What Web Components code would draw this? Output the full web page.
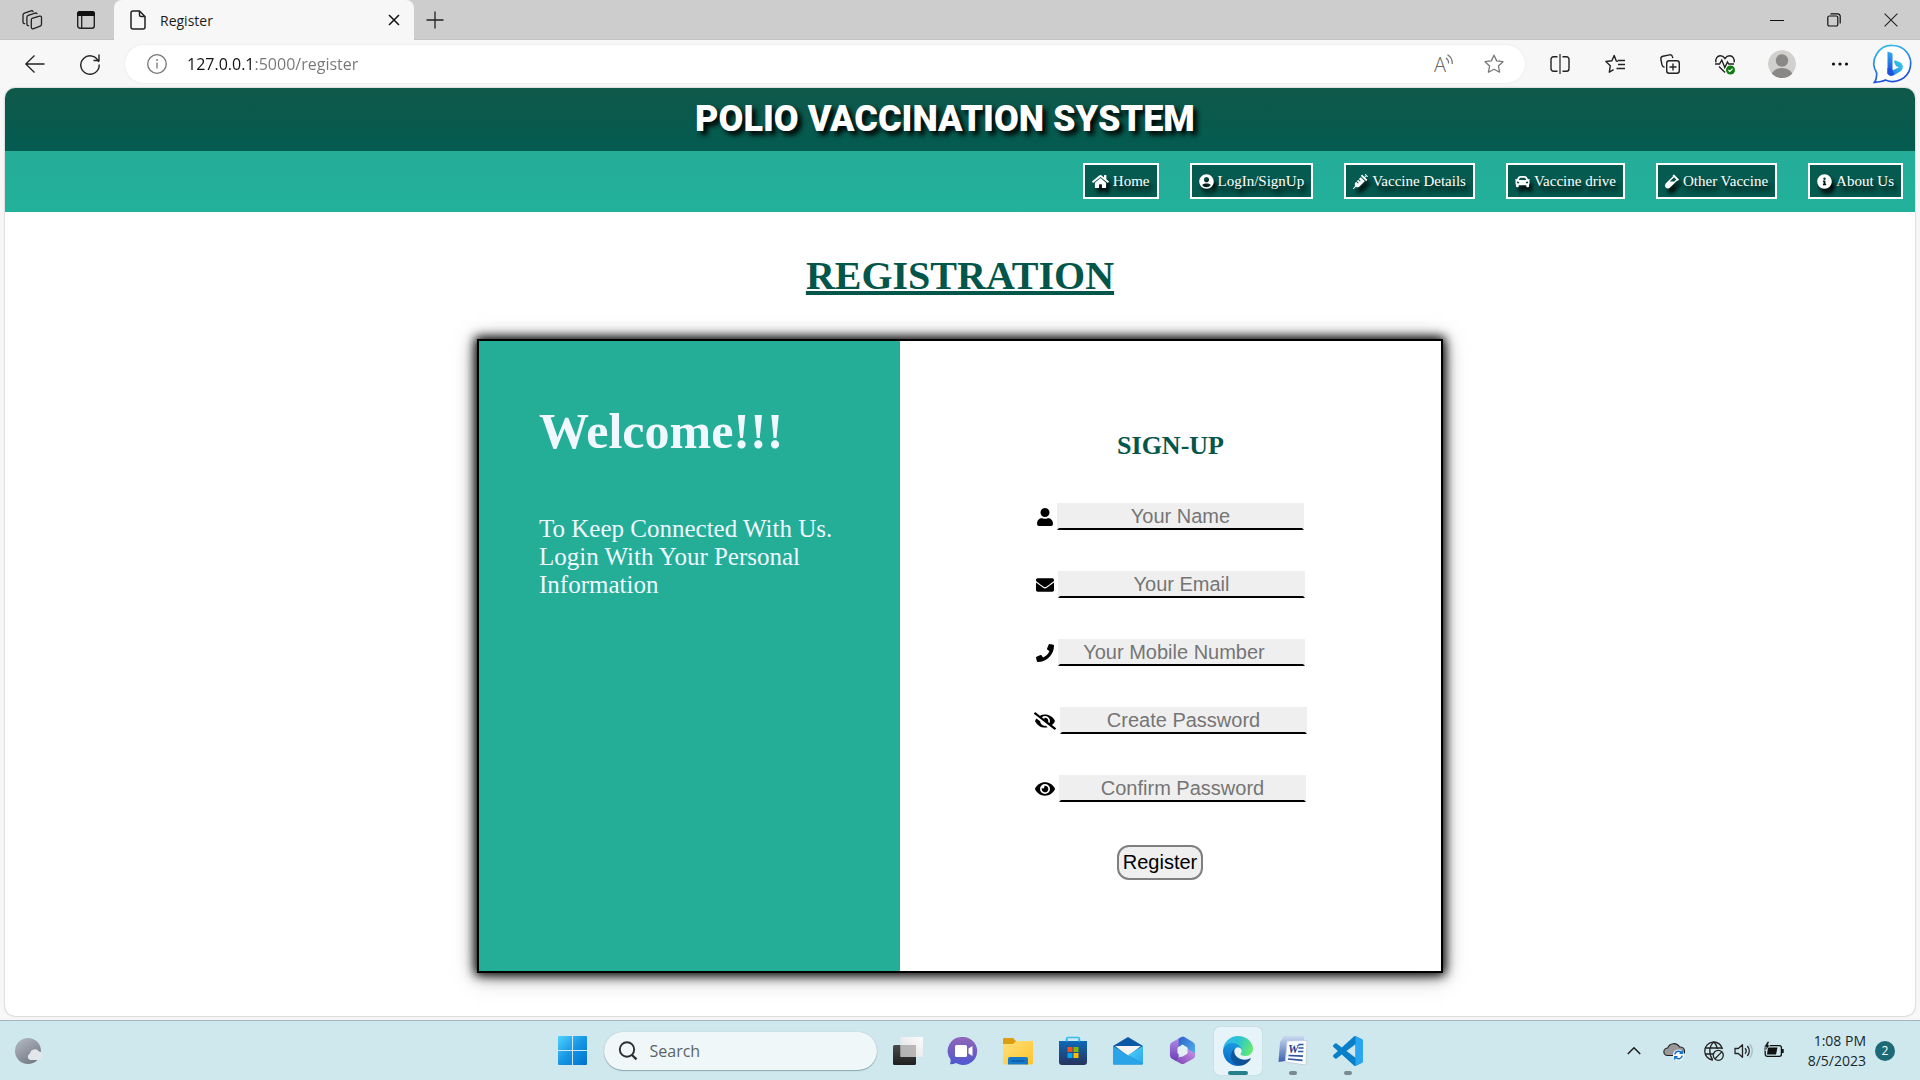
<!DOCTYPE html>
<html lang="en">
<head>
<meta charset="utf-8">
<title>Register</title>
<style>
  html, body { margin: 0; }
  body { font-family: "Open Sans", "Noto Sans", sans-serif; background: #f7f7f7; color: #1b1b1b; }
</style>
</head>
<body>
<desktop-screen>
  <edge-tabs slot="tabs"></edge-tabs>
  <edge-toolbar slot="toolbar"></edge-toolbar>
  <polio-page slot="page"></polio-page>
  <win-taskbar slot="taskbar"></win-taskbar>
</desktop-screen>

<script>
const ICONS = {
  workspaces: ['0 0 22 22', '<g fill="none" stroke="#222" stroke-width="1.3" stroke-linejoin="round" stroke-linecap="round"><path d="M11 9.3l7.5-2.2c1.2-.3 2 .4 2 1.5v6.700c0 .8-.5 1.500-1.300 1.800l-6.600 2.600c-1.200.5-2.300-.2-2.300-1.400v-7.200c0-.9.2-1.500.7-1.800z"/><path d="M7.600 16.700c-1 .1-1.700-.6-1.700-1.600V8.200c0-.9.5-1.600 1.400-1.900l6.700-2.200c.9-.3 1.600 0 2 .7"/><path d="M3.700 14.600c-1 0-1.700-.6-1.700-1.600V6c0-.9.5-1.600 1.400-1.900l6.700-2.200c.9-.3 1.600 0 2 .6"/></g>'],
  tabActions: ['0 0 18 18', '<rect x=".7" y=".7" width="16.600" height="16.600" rx="2.500" fill="none" stroke="#222" stroke-width="1.400"/><path d="M0 5V2.500A2.500 2.500 0 0 1 2.500 0h13A2.500 2.500 0 0 1 18 2.500V5z"/><path d="M4.700 5v12" stroke="#222" stroke-width="1.300"/>'],
  doc: ['0 0 16 20', '<path d="M1 3a2 2 0 0 1 2-2h6.500L15 6.500V17a2 2 0 0 1-2 2H3a2 2 0 0 1-2-2zM9.500 1v4a1.500 1.500 0 0 0 1.500 1.500h4" fill="none" stroke="#222" stroke-width="1.500"/>'],
  close: ['0 0 12 12', '<path d="M1 1l10 10M11 1L1 11" stroke="#111" stroke-width="1.500" fill="none"/>'],
  winClose: ['0 0 14 14', '<path d="M.6.6l12.800 12.800M13.400.6L.6 13.400" stroke="#222" stroke-width="1.100" fill="none"/>'],
  plus: ['0 0 18 18', '<path d="M9 .5v17M.5 9h17" stroke="#222" stroke-width="1.300"/>'],
  min: ['0 0 14 14', '<path d="M0 7.500h14" stroke="#111"/>'],
  max: ['0 0 14 14', '<g fill="none" stroke="#111" stroke-width="1.200"><rect x=".8" y="3" width="10" height="10" rx="1.600"/><path d="M3.500.8h7a2.600 2.600 0 0 1 2.700 2.600v7"/></g>'],
  back: ['0 0 20 20', '<path d="M19.500 10H.8M9.500 1.500L.8 10l8.700 8.500" fill="none" stroke="#222" stroke-width="1.300"/>'],
  reload: ['0 0 20 20', '<path d="M18.700 8A9.200 9.200 0 1 0 19.200 10.500M19 .5v6h-5.500" fill="none" stroke="#222" stroke-width="1.400"/>'],
  info: ['0 0 20 20', '<circle cx="10" cy="10" r="9.300" fill="none" stroke="#777" stroke-width="1.300"/><path d="M10 8.500v6" stroke="#777" stroke-width="1.300"/><circle cx="10" cy="6" r=".9" fill="#777"/>'],
  aloud: ['0 0 20 20', '<text x="0" y="18" font-family="Open Sans, sans-serif" font-weight="300" font-size="20" fill="#666">A</text><path d="M12 4a6 6 0 0 1 2.500 5.500M13.500.8a10 10 0 0 1 4.800 9.200" fill="none" stroke="#777" stroke-width="1.300"/>'],
  star: ['0 0 20 20', '<path d="M10 1.200l2.700 5.700 6.300.8-4.600 4.300 1.200 6.200L10 15.200l-5.600 3 1.200-6.200L1 7.700l6.300-.8z" fill="none" stroke="#777" stroke-width="1.300" stroke-linejoin="round"/>'],
  split: ['0 0 20 20', '<g fill="none" stroke="#222" stroke-width="1.400"><path d="M7.500 2.700h-4A2.500 2.500 0 0 0 1 5.200v9.600a2.500 2.500 0 0 0 2.500 2.500h4M12.500 2.700h4A2.500 2.500 0 0 1 19 5.200v9.600a2.500 2.500 0 0 1-2.500 2.500h-4"/><path d="M10 0v20" stroke-width="1.200"/></g>'],
  favs: ['0 0 20 20', '<path d="M13 7.300L11.300 7 9.200 1.500 6.900 6.800.9 7.500l4.400 4.300-1 6.400 4.300-2.600M13 6.500h7M13 10.500h7M11.500 14.500h8.500" fill="none" stroke="#222" stroke-width="1.400" stroke-linejoin="round"/>'],
  collections: ['0 0 20 20', '<g fill="none" stroke="#222" stroke-width="1.400"><rect x="6.700" y="6.700" width="12.600" height="12.600" rx="2.500"/><path d="M13 9.500v7M9.500 13h7M4.500 13.200C3 13 2.300 12 2 10.800L.9 5.500C.6 4 1.400 2.700 2.900 2.300L9.500.9c1.500-.3 2.700.5 3 2l.3 1.300"/></g>'],
  heart: ['0 0 20 20', '<g fill="none" stroke="#222" stroke-width="1.400"><path d="M.9 8.300C.2 4.500 2.400 1.800 5.300 1.800c2 0 3.500 1 4.700 2.700 1.200-1.700 2.700-2.700 4.700-2.700 2.900 0 5.100 2.700 4.400 6.500M4 12.500l6 6"/><path d="M0 10h4.500l2.300-4 3 7.500L12.500 8l1.200 2h5.300"/></g><circle cx="15.500" cy="16" r="4.500" fill="#107c10"/><path d="M13.400 16l1.500 1.500 2.700-2.800" fill="none" stroke="#fff" stroke-width="1.100"/>'],
  avatar: ['0 0 28 28', '<clipPath id="a"><circle cx="14" cy="14" r="14"/></clipPath><g clip-path="url(#a)"><circle cx="14" cy="14" r="14" fill="#d2d0ce"/><circle cx="14" cy="10.500" r="6.200" fill="#8a8886"/><ellipse cx="14" cy="25.500" rx="10.500" ry="7.500" fill="#8a8886"/></g>'],
  dots: ['0 0 18 18', '<circle cx="2.500" cy="9" r="1.600"/><circle cx="9" cy="9" r="1.600"/><circle cx="15.500" cy="9" r="1.600"/>'],
  bing: ['0 0 40 40', '<defs><linearGradient id="a" x1="0" y1="0" x2=".3" y2="1"><stop stop-color="#35c5f0"/><stop offset="1" stop-color="#1b4ed8"/></linearGradient><linearGradient id="b" x1="0" y1="0" x2="0" y2="1"><stop stop-color="#2fa8f5"/><stop offset="1" stop-color="#1b48d8"/></linearGradient><linearGradient id="c" x1="1" y1="0" x2="0" y2="1"><stop stop-color="#38d5e8"/><stop offset="1" stop-color="#2170e8"/></linearGradient></defs><path d="M20.500 1.500A18 18 0 1 1 13 36c-2.500 1.200-6 2-11 2.300C3.800 36 4.200 33.500 4.200 29A18 18 0 0 1 20.500 1.500z" transform="translate(-.5 0)" fill="#fff" stroke="url(#a)" stroke-width="1.700"/><path d="M14.500 7.500l3.500 1.300c1 .4 1.500 1 1.500 2v14.700l-5 5z" fill="url(#b)"/><path d="M14.500 27.500c0 4 3 5.500 6.500 3.700l6.500-4c4-2.500 2.500-8-1-9.200l-4-1.400c-1.200-.4-1.800.6-1.300 1.600l1.700 3.700 3 1.300-9 4.500z" fill="url(#c)"/><path d="M14.500 24v4c0 3.500 3.500 4.500 6.500 2.800l-1.500-5.300z" fill="#1c52dc"/>'],

  home: ['0 0 576 512', '<path d="M280.370 148.260L96 300.110V464a16 16 0 0 0 16 16l112.060-.29a16 16 0 0 0 15.920-16V368a16 16 0 0 1 16-16h64a16 16 0 0 1 16 16v95.640a16 16 0 0 0 16 16.050L464 480a16 16 0 0 0 16-16V300L295.670 148.260a12.190 12.190 0 0 0-15.300 0zM571.600 251.470L488 182.560V44.050a12 12 0 0 0-12-12h-56a12 12 0 0 0-12 12v72.610L318.470 43a48 48 0 0 0-61 0L4.340 251.470a12 12 0 0 0-1.600 16.900l25.500 31A12 12 0 0 0 45.150 301l235.220-193.740a12.190 12.190 0 0 1 15.300 0L530.900 301a12 12 0 0 0 16.900-1.600l25.500-31a12 12 0 0 0-1.700-16.930z"/>'],
  account: ['0 0 496 512', '<path d="M248 8C111 8 0 119 0 256s111 248 248 248 248-111 248-248S385 8 248 8zm0 96c48.600 0 88 39.400 88 88s-39.400 88-88 88-88-39.400-88-88 39.400-88 88-88zm0 344c-58.700 0-111.300-26.600-146.500-68.200 18.800-35.400 55.600-59.800 98.500-59.800 2.400 0 4.800.4 7.100 1.100 13 4.200 26.600 6.900 40.900 6.900 14.300 0 28-2.700 40.900-6.900 2.300-.7 4.700-1.100 7.100-1.100 42.900 0 79.700 24.400 98.500 59.800C359.300 421.400 306.700 448 248 448z"/>'],
  syringe: ['0 0 512 512', '<path d="M201.500 174.800l55.700 55.800c3.100 3.100 3.100 8.200 0 11.300l-11.300 11.300c-3.100 3.100-8.200 3.100-11.300 0l-55.700-55.800-45.300 45.300 55.800 55.800c3.100 3.100 3.100 8.200 0 11.300l-11.300 11.300c-3.100 3.100-8.200 3.100-11.300 0L111 265.200l-26.400 26.400c-17.300 17.300-25.600 41.100-23 65.400l7.100 63.600L2.300 487c-3.100 3.100-3.100 8.200 0 11.300l11.300 11.300c3.100 3.100 8.200 3.100 11.300 0l66.300-66.300 63.600 7.100c23.900 2.600 47.900-5.400 65.400-23l181.900-181.900-135.700-135.700-64.900 65zm308.200-93.300L430.500 2.300c-3.100-3.100-8.200-3.100-11.300 0l-11.300 11.300c-3.100 3.100-3.100 8.200 0 11.300l28.300 28.300-45.300 45.300-56.600-56.600-17-17c-3.100-3.100-8.200-3.100-11.300 0l-33.900 33.900c-3.100 3.100-3.100 8.200 0 11.300l17 17L424.800 223l17 17c3.100 3.100 8.200 3.100 11.300 0l33.900-34c3.100-3.100 3.100-8.200 0-11.300l-73.500-73.500 45.300-45.300 28.300 28.300c3.100 3.100 8.200 3.100 11.300 0l11.300-11.300c3.100-3.200 3.100-8.200 0-11.400z"/>'],
  car: ['0 0 512 512', '<path d="M499.990 176h-59.870l-16.640-41.600C406.380 91.630 365.570 64 319.500 64h-127c-46.060 0-86.880 27.630-103.990 70.400L71.870 176H12.010C4.200 176-1.530 183.340.37 190.910l6 24C7.700 220.250 12.500 224 18.010 224h20.070C24.650 235.730 16 252.780 16 272v48c0 16.120 6.160 30.670 16 41.930V416c0 17.670 14.330 32 32 32h32c17.670 0 32-14.330 32-32v-32h256v32c0 17.670 14.330 32 32 32h32c17.670 0 32-14.330 32-32v-54.070c9.840-11.250 16-25.800 16-41.930v-48c0-19.220-8.650-36.270-22.070-48H494c5.510 0 10.310-3.750 11.640-9.090l6-24c1.890-7.570-3.840-14.910-11.650-14.910zm-352.060-17.830c7.290-18.220 24.940-30.170 44.570-30.170h127c19.630 0 37.280 11.950 44.570 30.170L384 208H128l19.930-49.830zM96 319.800c-19.200 0-32-12.760-32-31.900S76.800 256 96 256s48 28.710 48 47.850-28.800 15.950-48 15.950zm320 0c-19.200 0-48 3.190-48-15.950S396.800 256 416 256s32 12.760 32 31.900-12.800 31.900-32 31.900z"/>'],
  vial: ['0 0 480 512', '<path d="M477.700 186.100L309.500 18.300c-3.100-3.100-8.200-3.100-11.300 0l-34 33.900c-3.100 3.100-3.100 8.200 0 11.300l11.200 11.100L33 316.500c-38.800 38.700-45.100 102-9.400 143.500 20.600 24 49.500 36 78.400 35.900 26.400 0 52.800-10 72.900-30.100l246.300-245.700 11.200 11.100c3.100 3.100 8.200 3.100 11.300 0l34-33.900c3.100-3 3.100-8.100 0-11.200zM318 256H161l148-147.700 78.500 78.300L318 256z"/>'],
  infoFill: ['0 0 512 512', '<path d="M256 8C119.043 8 8 119.083 8 256c0 136.997 111.043 248 248 248s248-111.003 248-248C504 119.083 392.957 8 256 8zm0 110c23.196 0 42 18.804 42 42s-18.804 42-42 42-42-18.804-42-42 18.804-42 42-42zm56 254c0 6.627-5.373 12-12 12h-88c-6.627 0-12-5.373-12-12v-24c0-6.627 5.373-12 12-12h12v-64h-12c-6.627 0-12-5.373-12-12v-24c0-6.627 5.373-12 12-12h64c6.627 0 12 5.373 12 12v100h12c6.627 0 12 5.373 12 12v24z"/>'],
  user: ['0 0 448 512', '<path d="M224 256c70.700 0 128-57.300 128-128S294.700 0 224 0 96 57.300 96 128s57.300 128 128 128zm89.600 32h-16.700c-22.200 10.200-46.900 16-72.900 16s-50.600-5.800-72.900-16h-16.700C60.200 288 0 348.200 0 422.400V464c0 26.500 21.500 48 48 48h352c26.500 0 48-21.500 48-48v-41.600c0-74.200-60.200-134.400-134.400-134.400z"/>'],
  envelope: ['0 0 512 512', '<path d="M502.300 190.800c3.900-3.100 9.700-.2 9.700 4.700V400c0 26.500-21.500 48-48 48H48c-26.500 0-48-21.500-48-48V195.600c0-5 5.700-7.800 9.700-4.700 22.400 17.400 52.100 39.500 154.100 113.600 21.100 15.400 56.700 47.800 92.200 47.600 35.700.3 72-32.800 92.300-47.600 102-74.100 131.600-96.300 154-113.700zM256 320c23.200.4 56.600-29.200 73.400-41.400 132.700-96.300 142.800-104.700 173.400-128.700 5.800-4.500 9.200-11.500 9.200-18.900v-19c0-26.500-21.500-48-48-48H48c-26.500 0-48 21.500-48 48v19c0 7.400 3.400 14.300 9.200 18.900 30.600 23.900 40.700 32.400 173.400 128.700 16.800 12.200 50.200 41.800 73.400 41.400z"/>'],
  phone: ['0 0 512 512', '<path d="M493.400 24.600l-104-24c-11.300-2.600-22.900 3.300-27.500 13.900l-48 112c-4.200 9.800-1.400 21.300 6.900 28l60.600 49.600c-36 76.700-98.900 140.500-177.200 177.200l-49.600-60.600c-6.800-8.300-18.200-11.100-28-6.900l-112 48C3.900 366.500-2 378.100.6 389.400l24 104C27.100 504.200 36.700 512 48 512c256.100 0 464-207.500 464-464 0-11.200-7.700-20.900-18.600-23.400z"/>'],
  eyeSlash: ['0 0 640 512', '<path d="M320 400c-75.850 0-137.250-58.710-142.900-133.110L72.200 185.820c-13.790 17.300-26.480 35.590-36.720 55.590a32.350 32.350 0 0 0 0 29.190C89.710 376.410 197.070 448 320 448c26.910 0 52.870-4 77.890-10.460L346 397.390a144.130 144.130 0 0 1-26 2.610zm313.820 58.100l-110.550-85.440a331.250 331.250 0 0 0 81.250-102.070 32.350 32.350 0 0 0 0-29.190C550.290 135.590 442.930 64 320 64a308.150 308.150 0 0 0-147.320 37.700L45.460 3.370A16 16 0 0 0 23 6.180L3.370 31.450A16 16 0 0 0 6.180 53.900l588.360 454.730a16 16 0 0 0 22.460-2.810l19.640-25.270a16 16 0 0 0-2.820-22.450zm-183.720-142l-39.300-30.380A94.750 94.750 0 0 0 416 256a94.760 94.760 0 0 0-121.310-92.210A47.650 47.650 0 0 1 304 192a46.640 46.640 0 0 1-1.540 10l-73.610-56.890A142.310 142.310 0 0 1 320 112a143.920 143.920 0 0 1 144 144c0 21.630-5.290 41.790-13.900 60.110z"/>'],
  eye: ['0 0 576 512', '<path d="M572.520 241.400C518.290 135.590 410.930 64 288 64S57.680 135.640 3.480 241.410a32.350 32.350 0 0 0 0 29.190C57.710 376.410 165.070 448 288 448s230.320-71.640 284.520-177.410a32.350 32.350 0 0 0 0-29.190zM288 400a144 144 0 1 1 144-144 143.930 143.930 0 0 1-144 144zm0-240a95.310 95.310 0 0 0-25.310 3.790 47.850 47.850 0 0 1-66.900 66.900A95.780 95.780 0 1 0 288 160z"/>'],

  windows: ['0 0 29 29', '<defs><linearGradient id="a" gradientUnits="userSpaceOnUse" x1="0" y1="0" x2="29" y2="29"><stop stop-color="#4fd3ff"/><stop offset=".5" stop-color="#1795e4"/><stop offset="1" stop-color="#0070d0"/></linearGradient></defs><path d="M1 0h13v14H0V1a1 1 0 0 1 1-1zM15 0h13a1 1 0 0 1 1 1v13H15zM0 15h14v14H1a1 1 0 0 1-1-1zM15 15h14v13a1 1 0 0 1-1 1H15z" fill="url(#a)"/>'],
  search: ['0 0 20 20', '<circle cx="9" cy="8.500" r="7.200" fill="none" stroke="#2a2f31" stroke-width="1.900"/><path d="M13.500 13.500l5 4.800" stroke="#2a2f31" stroke-width="2.300"/>'],
  taskView: ['0 0 30 30', '<defs><linearGradient id="a" x1="0" y1="0" x2="0" y2="1"><stop stop-color="#4b4b4b"/><stop offset="1" stop-color="#1f1f1f"/></linearGradient><linearGradient id="b" x1="1" y1="0" x2="0" y2="1"><stop stop-color="#fff"/><stop offset="1" stop-color="#ddd"/></linearGradient></defs><rect x="0" y="9" width="23" height="20" rx="1.500" fill="url(#a)"/><rect x="7.500" y="1" width="22.500" height="20" rx="1" fill="url(#b)" opacity=".92"/><path d="M7.500 9H23v12H7.500z" fill="#aaa" opacity=".75"/>'],
  chat: ['0 0 30 30', '<defs><linearGradient id="a" x1="0" y1="0" x2="0" y2="1"><stop stop-color="#9266b8"/><stop offset="1" stop-color="#4f57cf"/></linearGradient></defs><path d="M15 1a14 14 0 1 1-7 26c-2 1-4 1.500-6 1.300.6-1.600.8-3.300.5-5A14 14 0 0 1 15 1z" fill="url(#a)"/><rect x="7" y="9" width="12" height="12" rx="1.500" fill="#fff"/><path d="M20.500 12.500l4-2.500v10l-4-2.500z" fill="#fff"/>'],
  explorer: ['0 0 30 30', '<defs><linearGradient id="a" x1="0" y1="0" x2="1" y2="1"><stop stop-color="#ffe07a"/><stop offset="1" stop-color="#ffc42d"/></linearGradient></defs><path d="M1 2h9l3 3h16a1 1 0 0 1 1 1v6H0V3a1 1 0 0 1 1-1z" fill="#dd9d10"/><path d="M0 8h10l3-3h17v22a1.500 1.500 0 0 1-1.500 1.500h-27A1.500 1.500 0 0 1 0 27z" fill="url(#a)"/><path d="M5 28.500V23a2 2 0 0 1 2-2h16a2 2 0 0 1 2 2v5.500z" fill="#1579ca"/><path d="M8.500 25h13" stroke="#064f91"/>'],
  store: ['0 0 30 30', '<defs><linearGradient id="a" x1="0" y1="0" x2="0" y2="1"><stop stop-color="#0d69b8"/><stop offset="1" stop-color="#26335c"/></linearGradient></defs><path d="M8.500 8V3a1.500 1.500 0 0 1 1.500-1.500h10A1.500 1.500 0 0 1 21.500 3v5" fill="none" stroke="#35bdf0" stroke-width="1.600"/><path d="M1 5h28v21a3 3 0 0 1-3 3H4a3 3 0 0 1-3-3z" fill="url(#a)"/><path d="M9 5.500V3M21 5.500V3" stroke="#35bdf0" stroke-width="1.600"/><path d="M9.500 11h5v5h-5z" fill="#f25022"/><path d="M15.500 11h5v5h-5z" fill="#7fba00"/><path d="M9.500 17h5v5h-5z" fill="#00a4ef"/><path d="M15.500 17h5v5h-5z" fill="#ffb900"/>'],
  mail: ['0 0 30 30', '<defs><linearGradient id="a" x1="0" y1="0" x2="1" y2="1"><stop stop-color="#1a8bd8"/><stop offset="1" stop-color="#1684dc"/></linearGradient><linearGradient id="b" x1="0" y1="0" x2="1" y2="1"><stop stop-color="#52d3f7"/><stop offset="1" stop-color="#2aa6ea"/></linearGradient></defs><path d="M0 10l15-9 15 9v8H0z" fill="#0a58a6"/><path d="M2 10h26L15 20z" fill="#f4f4f4"/><path d="M0 10v17.500a1 1 0 0 0 1 1h28a1 1 0 0 0 1-1V10L15 20z" fill="url(#a)"/><path d="M30 10v18L15 19z" fill="url(#b)"/><path d="M0 10l30 18.500H0z" fill="#2ba3e8"/>'],
  m365: ['0 0 30 30', '<defs><linearGradient id="a" x1="0" y1="0" x2="0" y2="1"><stop stop-color="#b590ea"/><stop offset="1" stop-color="#6d3fb5"/></linearGradient><linearGradient id="b" x1="0" y1="0" x2="1" y2="1"><stop stop-color="#2c62c9"/><stop offset="1" stop-color="#55b9f0"/></linearGradient><linearGradient id="c" x1="0" y1="1" x2="1" y2="0"><stop stop-color="#7840b4"/><stop offset="1" stop-color="#cf9ae8"/></linearGradient></defs><path d="M14 1L4 6.500a4 4 0 0 0-2 3.500v10a4 4 0 0 0 2 3.500l4 2.200a3 3 0 0 0 3-2.700V12z" fill="url(#a)"/><path d="M11 2.500l3-1.500a3 3 0 0 1 3 0l9 5.500a4 4 0 0 1 2 3.500v10c0 1-.4 2-1 2.700L20 17V12l-5-3-4 3z" fill="url(#b)"/><path d="M28 18v2a4 4 0 0 1-2 3.500L17 28.500a4 4 0 0 1-4 0l-7-4c3 1 5 0 5-2.500l4-.8 5-3V13z" fill="url(#c)"/><path d="M15 9.500l4.700 2.700v5.600L15 20.500l-4.700-2.700v-5.600z" fill="#e3f0f5" stroke="#e3f0f5" stroke-linejoin="round"/>'],
  edge: ['4.600 4.900 256 256', '<defs><linearGradient id="a" x1="0" y1="0" x2="1" y2="0"><stop stop-color="#0c59a4"/><stop offset="1" stop-color="#114a8b"/></linearGradient><linearGradient id="b" x1=".6" y1="0" x2=".4" y2="1"><stop stop-color="#1b9de2"/><stop offset="1" stop-color="#0667c8"/></linearGradient><linearGradient id="c" x1="0" y1=".3" x2="1" y2=".6"><stop stop-color="#35b8ee"/><stop offset=".45" stop-color="#2bc3d2"/><stop offset="1" stop-color="#66eb6e"/></linearGradient></defs><path d="M235.680 195.460a93.730 93.730 0 0 1-10.540 4.710 101.870 101.870 0 0 1-35.900 6.460c-47.320 0-88.540-32.550-88.540-74.320A31.480 31.480 0 0 1 117.130 105c-42.800 1.800-53.800 46.400-53.800 72.530 0 73.880 68.090 81.370 82.760 81.370 7.910 0 19.840-2.300 27-4.560l1.310-.44a128.340 128.340 0 0 0 66.600-52.800 4 4 0 0 0-5.320-5.640z" fill="url(#a)"/><path d="M110.340 246.340A79.200 79.200 0 0 1 87.600 225a80.720 80.720 0 0 1 29.530-120c3.120-1.470 8.450-4.130 15.540-4a32.350 32.350 0 0 1 25.690 13 31.880 31.880 0 0 1 6.360 18.660c0-.21 24.460-79.600-80-79.600-43.900 0-80 41.660-80 78.210a130.150 130.150 0 0 0 12.110 56 128 128 0 0 0 156.380 67.110 75.550 75.550 0 0 1-62.780-8z" fill="url(#b)"/><path d="M156.940 153.780c-.81 1.050-3.300 2.500-3.300 5.660 0 2.610 1.700 5.120 4.720 7.230 14.380 10 41.490 8.680 41.560 8.680a59.560 59.560 0 0 0 30.270-8.350 61.380 61.380 0 0 0 30.430-52.880c.26-22.410-8-37.310-11.340-43.910-21.190-41.450-66.930-65.290-116.670-65.290a128 128 0 0 0-128 126.200c.48-36.540 36.800-66.050 80-66.050 3.500 0 23.460.34 42 10.070 16.340 8.580 24.900 18.940 30.850 29.210 6.180 10.670 7.280 24.150 7.280 29.520s-2.740 13.330-7.800 19.910z" fill="url(#c)"/>'],
  word: ['0 0 30 30', '<defs><linearGradient id="a" x1="0" y1="0" x2="0" y2="1"><stop stop-color="#c9d9f0"/><stop offset="1" stop-color="#3a62ae"/></linearGradient></defs><path d="M6 0h20v4L9 6l-2 19-6.500 1L2 6z" fill="url(#a)"/><path d="M9 5l20-.5L28 29 7.500 26z" fill="#fafcff" stroke="#b9c4d6" stroke-width=".7"/><text x="10" y="17" font-family="Liberation Serif, serif" font-weight="bold" font-style="italic" font-size="12" fill="#1d3f8c">W</text><path d="M20.500 8.500h5M20.500 12h5M20 15.500h5.300M10.500 19.500l14.500.7M10 23l14.500 1.300" stroke="#2d53a3" stroke-width="1.700"/>'],
  code: ['0 0 24 24', '<path d="M23.150 2.587L18.210.21a1.494 1.494 0 0 0-1.705.29l-9.460 8.630-4.120-3.128a.999.999 0 0 0-1.276.057L.327 7.261A1 1 0 0 0 .326 8.740L3.899 12 .326 15.260a1 1 0 0 0 .001 1.479L1.650 17.940a.999.999 0 0 0 1.276.057l4.120-3.128 9.460 8.630a1.492 1.492 0 0 0 1.704.29l4.942-2.377A1.500 1.500 0 0 0 24 20.060V3.939a1.500 1.500 0 0 0-.85-1.352zm-5.146 14.861L10.826 12l7.178-5.448v10.896z" fill="#0a7fc9"/><path d="M18 .1l5.150 2.487A1.500 1.500 0 0 1 24 3.940v16.120a1.500 1.500 0 0 1-.85 1.352L18 23.900z" fill="#2aa5f2"/>'],
  weather: ['0 0 28 28', '<defs><linearGradient id="a" x1="0" y1="0" x2=".6" y2="1"><stop stop-color="#b4bcc6"/><stop offset="1" stop-color="#777c85"/></linearGradient></defs><circle cx="13" cy="14" r="13" fill="url(#a)"/><path d="M15 23a3.500 3.500 0 0 1 0-6.500A5 5 0 0 1 24 14.500a4.300 4.300 0 0 1 0 8.500z" fill="#e3e6ea"/>'],
  chevron: ['0 0 14 14', '<path d="M.8 10L7 3.800 13.200 10" fill="none" stroke="#1b1b1b" stroke-width="1.500"/>'],
  cloud: ['0 0 20 20', '<path d="M3.500 14.500A3.700 3.700 0 0 1 3.700 7 6.500 6.500 0 0 1 15.500 6 4.300 4.300 0 0 1 17 14.500z" fill="#999" stroke="#222" stroke-width="1.100"/><circle cx="14.500" cy="14" r="5.500" fill="#fff"/><path d="M10.800 13.500a3.800 3.800 0 0 1 7-1.500M18.200 14.500a3.800 3.800 0 0 1-7 1.500M18.200 9.500V12.300h-2.700M10.800 18.500v-2.800h2.700" fill="none" stroke="#0c6cc9" stroke-width="1.400"/>'],
  globe: ['0 0 20 20', '<g fill="none" stroke="#222" stroke-width="1.300"><path d="M18.500 8A9 9 0 1 0 9 19"/><path d="M8.500 18.500C4.500 13 5 5 9.800 1M9.800 1c1.900 1.700 3.200 4.200 3.600 7M1.200 7h17M1.200 13h8"/><circle cx="14.300" cy="14.300" r="5"/><path d="M11 17.700l6.800-6.800"/></g>'],
  speaker: ['0 0 20 20', '<g fill="none" stroke="#222" stroke-width="1.300"><path d="M1 7.500h3.300L8.500 3.700v12.600L4.300 12.500H1z" stroke-linejoin="round"/><path d="M11 7.300a4 4 0 0 1 0 5.400M13.300 5a7.300 7.300 0 0 1 0 10"/><path d="M15.600 3a10.500 10.500 0 0 1 0 14" stroke="#a9b9be"/></g>'],
  battery: ['0 0 20 20', '<rect x="1.200" y="4.700" width="16.200" height="10.600" rx="2" fill="none" stroke="#111" stroke-width="1.300"/><path d="M18 8h1.700v4H18z"/><path d="M4 6.500h9.500L12 13.500H3z"/><path d="M3.500.5L0 6h2.300l-1 4 4.700-6H4L5.500.5z" fill="#111" stroke="#cfe8ee" stroke-width=".6"/>']
};

const define = (name, html) => {
  const tpl = document.createElement('template');
  tpl.innerHTML = html;
  customElements.define(name, class extends HTMLElement {
    constructor() {
      super();
      this.attachShadow({ mode: 'open' }).append(tpl.content.cloneNode(true));
    }
  });
};

// <ui-icon name="..." style="--w:..;--h:..">
customElements.define('ui-icon', class extends HTMLElement {
  connectedCallback() {
    if (this.shadowRoot) return;
    const [box, body] = ICONS[this.getAttribute('name')];
    this.attachShadow({ mode: 'open' }).innerHTML =
      `<style>:host{display:inline-flex;flex:none}svg{display:block;width:var(--w,20px);height:var(--h,var(--w,20px));fill:currentColor;overflow:visible}</style>
       <svg viewBox="${box}" aria-hidden="true">${body}</svg>`;
  }
});

define('desktop-screen', `
<style>
  :host { display: flex; flex-direction: column; min-height: 100vh; }
  .page { flex: 1; display: flex; padding: 0 5px 4px; }
  ::slotted([slot=page]) { flex: 1; }
</style>
<slot name="tabs"></slot><slot name="toolbar"></slot>
<div class="page"><slot name="page"></slot></div>
<slot name="taskbar"></slot>`);

define('edge-tabs', `
<style>
  :host { display: flex; height: 40px; background: #cdcdcd; padding: 0 1px 0 5px; box-shadow: inset 0 -1px #c2c2c2; }
  button { border: 0; padding: 0; background: none; display: flex; align-items: center; justify-content: center; width: 54px; height: 40px; color: #111; }
  .tab { display: flex; align-items: center; gap: 14px; width: 300px; margin-left: 1px; padding: 0 10px 0 16px; box-sizing: border-box; background: #f7f7f7; border-radius: 8px 8px 0 0; font-size: 14px; color: #1b1b1b; }
  .tab span { flex: 1; }
  .tab button { width: 20px; }
  .new { width: 42px; margin-right: auto; }
  .win { width: 57px; }
</style>
<button aria-label="Workspaces"><ui-icon name="workspaces" style="--w:22px"></ui-icon></button>
<button aria-label="Tab actions"><ui-icon name="tabActions" style="--w:18px"></ui-icon></button>
<div class="tab"><ui-icon name="doc" style="--w:16px;--h:20px"></ui-icon><span>Register</span>
<button aria-label="Close tab"><ui-icon name="close" style="--w:12px"></ui-icon></button></div>
<button class="new" aria-label="New tab"><ui-icon name="plus" style="--w:18px"></ui-icon></button>
<button class="win" aria-label="Minimize"><ui-icon name="min" style="--w:14px"></ui-icon></button>
<button class="win" aria-label="Restore"><ui-icon name="max" style="--w:14px"></ui-icon></button>
<button class="win" aria-label="Close"><ui-icon name="winClose" style="--w:14px"></ui-icon></button>`);

define('edge-toolbar', `
<style>
  :host { display: flex; align-items: center; height: 48px; background: #f7f7f7; padding: 0 2px 0 7px; }
  button { border: 0; padding: 0; background: none; display: flex; align-items: center; justify-content: center; width: 55px; height: 40px; color: #111; }
  .bar { flex: 1; display: flex; align-items: center; height: 38px; margin: 0 7px 0 8px; padding: 0 6px 0 22px; box-sizing: border-box; border-radius: 19px; background: #fff; box-shadow: 0 0 3px rgba(0,0,0,.08); }
  .bar button { width: 50px; }
  .bar .site { width: 20px; }
  input { flex: 1; min-width: 0; margin-left: 20px; padding: 0; border: 0; outline: 0; font: 16px/24px "Open Sans", "Noto Sans", sans-serif; background: linear-gradient(to right, #111 68px, #767676 68px); -webkit-background-clip: text; background-clip: text; -webkit-text-fill-color: transparent; color: #767676; }
  .me { width: 60px; } .bing { width: 51px; }
</style>
<button aria-label="Back"><ui-icon name="back"></ui-icon></button>
<button aria-label="Refresh"><ui-icon name="reload"></ui-icon></button>
<div class="bar">
  <button class="site" aria-label="Site information"><ui-icon name="info"></ui-icon></button>
  <input aria-label="Address" value="127.0.0.1:5000/register">
  <button aria-label="Read aloud"><ui-icon name="aloud"></ui-icon></button>
  <button aria-label="Add to favorites"><ui-icon name="star"></ui-icon></button>
</div>
<button aria-label="Split screen"><ui-icon name="split"></ui-icon></button>
<button aria-label="Favorites"><ui-icon name="favs"></ui-icon></button>
<button aria-label="Collections"><ui-icon name="collections"></ui-icon></button>
<button aria-label="Browser essentials"><ui-icon name="heart"></ui-icon></button>
<button class="me" aria-label="Profile"><ui-icon name="avatar" style="--w:28px"></ui-icon></button>
<button aria-label="Settings and more"><ui-icon name="dots" style="--w:18px"></ui-icon></button>
<button class="bing" aria-label="Discover"><ui-icon name="bing" style="--w:40px"></ui-icon></button>`);

define('nav-link', `
<style>
  :host { display: block; }
  a { display: flex; align-items: center; gap: 4px; height: 36px; box-sizing: border-box; padding: 0 7px; border: 2px solid #fff; background: #055b50; color: #fff; text-decoration: none; font: 15px/18px "Liberation Serif", serif; text-shadow: 3px 5px 5px #000; }
  ::slotted(ui-icon) { filter: drop-shadow(3px 5px 2px #000); }
</style>
<a href="#"><slot name="icon"></slot><slot></slot></a>`);

define('form-field', `
<style>
  :host { display: flex; align-items: center; justify-content: center; gap: 4px; }
  label { display: flex; color: #000; }
  input { width: 247px; height: 27px; box-sizing: border-box; padding: 1px 2px; border: 2px solid transparent; border-bottom-color: #000; outline: 0; background: #efefef; text-align: center; font: 20px/23px "Liberation Sans", Arial, sans-serif; }
  input::placeholder { color: #757575; }
</style>
<label for="field"><slot></slot></label><input id="field">`);
{
  const Base = customElements.get('form-field');
  customElements.define('text-field', class extends Base {
    connectedCallback() {
      const input = this.shadowRoot.querySelector('input');
      input.type = this.getAttribute('type') || 'text';
      input.placeholder = this.getAttribute('hint');
      input.setAttribute('aria-label', input.placeholder);
    }
  });
}

define('register-card', `
<style>
  :host { display: flex; width: 100%; max-width: 966px; box-sizing: border-box; border: 2px solid #000; background: #fff; box-shadow: 0 0 10px 2px #000, 0 2px 20px rgba(0,0,0,.5); }
  aside { flex: 0 0 421px; box-sizing: border-box; padding: 62px 60px; background: #24ad97; color: #f0f8ff; }
  h1 { margin: 0 0 56px; font-size: 50px; line-height: 56px; }
  p { margin: 0; font-size: 25px; line-height: 28px; }
  section { flex: 1; padding: 90px 0 91px; }
  h2 { margin: 0 0 42px; color: #04564a; text-align: center; font-size: 26px; line-height: 30px; }
  form { display: flex; flex-direction: column; gap: 41px; }
  .submit { display: flex; justify-content: center; padding: 2px 21px 0 0; }
  button { height: 35px; padding: 0 4px; border: 2px solid #7f7f7f; border-radius: 12px; background: #efefef; color: #000; font: 20px/23px "Liberation Sans", Arial, sans-serif; }
</style>
<aside><h1>Welcome!!!</h1><p>To Keep Connected With Us. Login With Your Personal Information</p></aside>
<section>
  <h2>SIGN-UP</h2>
  <form>
    <text-field hint="Your Name"><ui-icon name="user" style="--w:16px;--h:18px"></ui-icon></text-field>
    <text-field hint="Your Email" type="email"><ui-icon name="envelope" style="--w:18px"></ui-icon></text-field>
    <text-field hint="Your Mobile Number" type="number"><ui-icon name="phone" style="--w:18px"></ui-icon></text-field>
    <text-field hint="Create Password" type="password"><ui-icon name="eyeSlash" style="--w:22px;--h:18px"></ui-icon></text-field>
    <text-field hint="Confirm Password" type="password"><ui-icon name="eye" style="--w:20px;--h:18px"></ui-icon></text-field>
    <div class="submit"><button type="button">Register</button></div>
  </form>
</section>`);

define('polio-page', `
<style>
  :host { display: block; overflow: hidden; border-radius: 10px; background: #fff; box-shadow: 0 0 2px rgba(0,0,0,.35); font-family: "Liberation Serif", "Times New Roman", serif; }
  header { height: 63px; padding-right: 30px; background: linear-gradient(#10594a, #035b50); color: #fff; }
  h1 { margin: 0; text-align: center; font: 900 36px/63px Roboto, sans-serif; text-shadow: 4px 4px 5px #000; }
  nav { display: flex; justify-content: flex-end; gap: 31px; padding: 12px 12px 13px; background: linear-gradient(#25ad98, #22b19b); }
  h2 { margin: 0; padding: 40px 0; color: #04564a; text-align: center; text-decoration: underline; font-size: 40px; line-height: 47px; }
  main { display: flex; flex-direction: column; align-items: center; padding-bottom: 43px; }
</style>
<header><h1>POLIO VACCINATION SYSTEM</h1></header>
<nav>
  <nav-link><ui-icon slot="icon" name="home" style="--w:17px;--h:15px"></ui-icon>Home</nav-link>
  <nav-link><ui-icon slot="icon" name="account" style="--w:15px"></ui-icon>LogIn/SignUp</nav-link>
  <nav-link><ui-icon slot="icon" name="syringe" style="--w:15px"></ui-icon>Vaccine Details</nav-link>
  <nav-link><ui-icon slot="icon" name="car" style="--w:15px"></ui-icon>Vaccine drive</nav-link>
  <nav-link><ui-icon slot="icon" name="vial" style="--w:14px;--h:15px"></ui-icon>Other Vaccine</nav-link>
  <nav-link><ui-icon slot="icon" name="infoFill" style="--w:15px"></ui-icon>About Us</nav-link>
</nav>
<main><h2>REGISTRATION</h2><register-card></register-card></main>`);

define('task-button', `
<style>
  :host { display: block; }
  button { position: relative; display: flex; align-items: center; justify-content: center; width: 48px; height: 48px; padding: 0; border: 0; border-radius: 5px; background: none; }
  :host([active]) button { background: #e6f3f8; box-shadow: 0 0 1px rgba(0,0,0,.3); }
  i { display: none; position: absolute; bottom: 0; width: 8px; height: 4px; border-radius: 2px; background: #7b8a8e; }
  :host([running]) i, :host([active]) i { display: block; }
  :host([active]) i { width: 20px; background: #26818f; }
</style>
<button><slot></slot><i></i></button>`);

define('win-taskbar', `
<style>
  :host { display: grid; grid-template-columns: 1fr auto 1fr; align-items: center; height: 60px; box-sizing: border-box; border-top: 1px solid #a3b5ba; background: #cfe8ee; }
  .left { display: flex; padding-left: 15px; }
  .mid { display: flex; align-items: center; gap: 7px; }
  .apps { display: flex; gap: 7px; }
  .search { display: flex; align-items: center; gap: 12px; width: 273px; height: 38px; box-sizing: border-box; padding: 0 14px; border-radius: 19px; background: #f0f7f9; box-shadow: 0 1px 1px rgba(80,110,120,.5), 0 0 1px rgba(80,110,120,.4); }
  input { flex: 1; min-width: 0; padding: 0; border: 0; outline: 0; background: none; font: 16px/24px "Open Sans", "Noto Sans", sans-serif; }
  input::placeholder { color: #5b6467; }
  .tray { display: flex; align-items: center; justify-content: flex-end; padding-right: 25px; }
  .tray button { border: 0; padding: 0; background: none; color: #111; display: flex; justify-content: center; width: 30px; }
  .tray .wide { margin-right: 10px; }
  time { width: 77px; text-align: right; font-size: 14px; line-height: 20px; color: #16282c; }
  .badge { width: 20px; height: 20px; margin-left: 9px; border-radius: 10px; background: #1c6a76; color: #fff; text-align: center; font-size: 12px; line-height: 20px; }
</style>
<div class="left"><ui-icon name="weather" style="--w:28px"></ui-icon></div>
<div class="mid">
  <task-button><ui-icon name="windows" style="--w:29px"></ui-icon></task-button>
  <label class="search"><ui-icon name="search"></ui-icon><input placeholder="Search" aria-label="Search"></label>
  <div class="apps">
    <task-button><ui-icon name="taskView" style="--w:30px"></ui-icon></task-button>
    <task-button><ui-icon name="chat" style="--w:30px"></ui-icon></task-button>
    <task-button><ui-icon name="explorer" style="--w:30px"></ui-icon></task-button>
    <task-button><ui-icon name="store" style="--w:30px"></ui-icon></task-button>
    <task-button><ui-icon name="mail" style="--w:30px"></ui-icon></task-button>
    <task-button><ui-icon name="m365" style="--w:29px"></ui-icon></task-button>
    <task-button active><ui-icon name="edge" style="--w:30px"></ui-icon></task-button>
    <task-button running><ui-icon name="word" style="--w:30px"></ui-icon></task-button>
    <task-button running><ui-icon name="code" style="--w:30px"></ui-icon></task-button>
  </div>
</div>
<div class="tray">
  <button class="wide" aria-label="Show hidden icons"><ui-icon name="chevron" style="--w:14px"></ui-icon></button>
  <button class="wide" aria-label="OneDrive"><ui-icon name="cloud"></ui-icon></button>
  <button aria-label="Network"><ui-icon name="globe"></ui-icon></button>
  <button aria-label="Volume"><ui-icon name="speaker"></ui-icon></button>
  <button aria-label="Battery"><ui-icon name="battery"></ui-icon></button>
  <time>1:08 PM<br>8/5/2023</time>
  <div class="badge">2</div>
</div>`);
</script>
</body>
</html>
